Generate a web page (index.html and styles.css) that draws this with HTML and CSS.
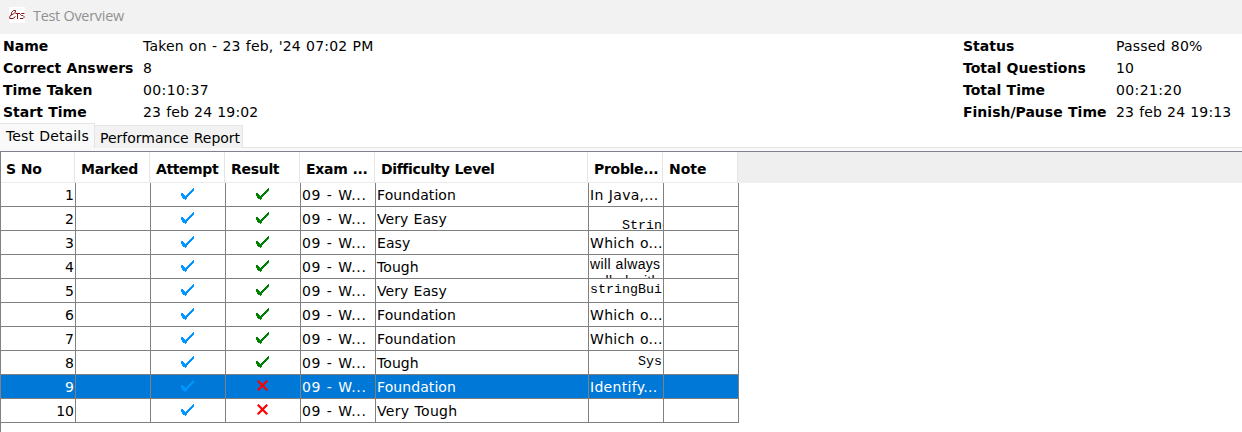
FILE: index.html
```html
<!DOCTYPE html>
<html lang="en">
<head>
<meta charset="utf-8">
<title>Test Overview</title>
<link rel="stylesheet" href="styles.css">
</head>
<body>
<header class="titlebar">
<svg class="logo" width="16" height="16" viewBox="0 0 16 16" aria-label="ETS"><rect width="16" height="16" fill="#fff"/><g fill="none" stroke="#8b1018" stroke-width="1"><path d="M1 8.500L4.500 7L6.500 5V3.500H4.500L2.500 5.500V7.500L.8 9.500V11.500H4L6.500 9.500"/><path d="M6.500 6.500H11M8.500 6.500V12M15.500 6.500H12.500L11.500 7.500L12.500 8.500H14L15 9.500V10.500L14 11.500H11"/></g></svg>
<span class="title">Test Overview</span>
</header>
<section class="summary">
<dl class="facts left">
<dt>Name</dt><dd class="taken">Taken on - 23 feb, '24 07:02 PM</dd>
<dt>Correct Answers</dt><dd>8</dd>
<dt>Time Taken</dt><dd class="clock">00:10:37</dd>
<dt>Start Time</dt><dd class="date">23 feb 24 19:02</dd>
</dl>
<dl class="facts right">
<dt>Status</dt><dd class="taken">Passed 80%</dd>
<dt>Total Questions</dt><dd>10</dd>
<dt>Total Time</dt><dd class="clock">00:21:20</dd>
<dt>Finish/Pause Time</dt><dd class="date">23 feb 24 19:13</dd>
</dl>
</section>
<nav class="tabs"><span class="tab active">Test Details</span><span class="tab">Performance Report</span></nav>
<main class="panel">
<div class="row head"><span>S No</span><span>Marked</span><span class="attempt">Attempt</span><span>Result</span><span>Exam ...</span><span class="difficulty">Difficulty Level</span><span>Proble...</span><span class="note">Note</span></div>
<div id="rows"></div>
</main>
<svg class="defs" width="0" height="0"><symbol id="check" viewBox="0 0 13 12"><path d="M0 5H2V6H3V7H4V8H5V7H6V6H7V5H8V4H9V3H10V2H11V1H12V0H13V3H12V4H11V5H10V6H9V7H8V8H7V9H6V10H5V12H4V11H2V10H1V8H0Z M5 10H6V11H5Z" fill="currentColor" shape-rendering="crispEdges"/></symbol><symbol id="cross" viewBox="0 0 11 11"><path d="M.7 .7L10.300 10.300M10.300 .7L.7 10.300" stroke="currentColor" stroke-width="2.2" fill="none"/></symbol></svg>
<script src="rows.js"></script>
</body>
</html>
```
FILE: styles.css
```css
* { box-sizing: border-box; }
body { margin: 0; width: 1242px; height: 432px; overflow: hidden; background: #fff; color: #000; font: 14px/22px "DejaVu Sans", Verdana, sans-serif; word-spacing: .5px; }
.titlebar { height: 34px; background: #f2f2f2; display: flex; padding: 7px 0 0 9px; gap: 8px; }
.logo { flex: none; }
.title { color: #919191; font: 14.4px/18px "Open Sans", sans-serif; word-spacing: 0; letter-spacing: -.25px; }
.summary { height: 89px; display: flex; justify-content: space-between; padding: 1px 0 0 3px; }
.facts { margin: 0; display: grid; grid-auto-rows: 22px; white-space: nowrap; }
.left { grid-template-columns: 140px 300px; }
.right { grid-template-columns: 153px 126px; }
.facts dt { font-weight: bold; }
.facts dd { margin: 0; }
.facts .taken { letter-spacing: .2px; }
.facts .date { letter-spacing: .14px; }
.clock { letter-spacing: .4px; }
.tabs { height: 28px; display: flex; align-items: flex-start; background: linear-gradient(#fff 24px, #e5e5e5 24px, #e5e5e5 25px, #f9f9f9 25px); white-space: nowrap; }
.tab { width: 148px; height: 23px; margin-top: 2px; border: 1px solid #e5e5e5; border-width: 1px 1px 0 0; background: #f2f2f2; padding: 1px 0 0 5px; line-height: 23px; }
.tab.active { width: 95px; height: 25px; margin-top: 0; background: #f9f9f9; padding-left: 6px; letter-spacing: .15px; }
.panel { height: 281px; border-top: 1px solid #7f828b; border-left: 1px solid #7f828b; background: linear-gradient(#efefef 31px, #fff 31px); }
.row { display: grid; grid-template-columns: repeat(5, 75px) 213px 75px 75px; width: 738px; height: 24px; }
.head { width: 737px; grid-template-columns: 74px repeat(4, 75px) 213px 75px 75px; height: 31px; font-weight: bold; background: #fff; white-space: nowrap; letter-spacing: -.3px; }
.head span { height: 31px; padding: 2px 0 0 6px; line-height: 31px; border-right: 1px solid #e5e5e5; border-bottom: 1px solid #ebebeb; }
.head span:first-child { padding-left: 5px; }
.head .attempt { letter-spacing: -.4px; }
.head .difficulty { letter-spacing: -.38px; }
.head .note { letter-spacing: 0; }
.cell { border: 1px solid #808080; border-width: 0 1px 1px 0; overflow: hidden; white-space: nowrap; line-height: 25px; padding-left: 1px; }
.num { text-align: right; padding-right: 1px; }
.exam { letter-spacing: .7px; }
.level { letter-spacing: .08px; }
.wide { letter-spacing: .3px; }
.icon { display: flex; justify-content: center; align-items: flex-start; padding: 5px 1px 0 0; }
.icon svg { display: block; }
.blue { color: #0096ff; }
.green { color: #008000; }
.red { color: #f00; }
.selected { background: #0078d7; color: #fff; }
.code { font: 13.33px/16px "Liberation Mono", monospace; white-space: pre; word-spacing: 0; }
.prose { font: 14px/17px "Liberation Sans", sans-serif; padding-top: 1px; letter-spacing: .35px; }
.string { padding: 11px 0 0 33px; }
.builder { padding-top: 3px; }
.system { padding: 3px 0 0 49px; }
.defs { display: none; }
```
FILE: rows.js
```js
const levels = ['Foundation', 'Very Easy', 'Easy', 'Tough', 'Very Easy', 'Foundation', 'Foundation', 'Tough', 'Foundation', 'Very Tough'];
const problems = [
  ['wide', 'In Java,...'], ['code string', 'String'], ['wide', 'Which o...'],
  ['prose', 'will always<br>called with'], ['code builder', 'stringBui'],
  ['wide', 'Which o...'], ['wide', 'Which o...'], ['code system', 'Syst'],
  ['wide', 'Identify...'], ['', '']
];
const check = '<svg width="13" height="12"><use href="#check"/></svg>';
const cross = '<svg width="11" height="11"><use href="#cross"/></svg>';
document.getElementById('rows').innerHTML = levels.map((level, i) => `
<div class="row ${i === 8 ? 'selected' : ''}">
<span class="cell num">${i + 1}</span><span class="cell"></span>
<span class="cell icon blue">${check}</span>
<span class="cell icon ${i < 8 ? 'green' : 'red'}">${i < 8 ? check : cross}</span>
<span class="cell exam">09 - W...</span><span class="cell ${i === 9 ? 'wide' : 'level'}">${level}</span>
<span class="cell ${problems[i][0]}">${problems[i][1]}</span><span class="cell"></span>
</div>`).join('');
```
